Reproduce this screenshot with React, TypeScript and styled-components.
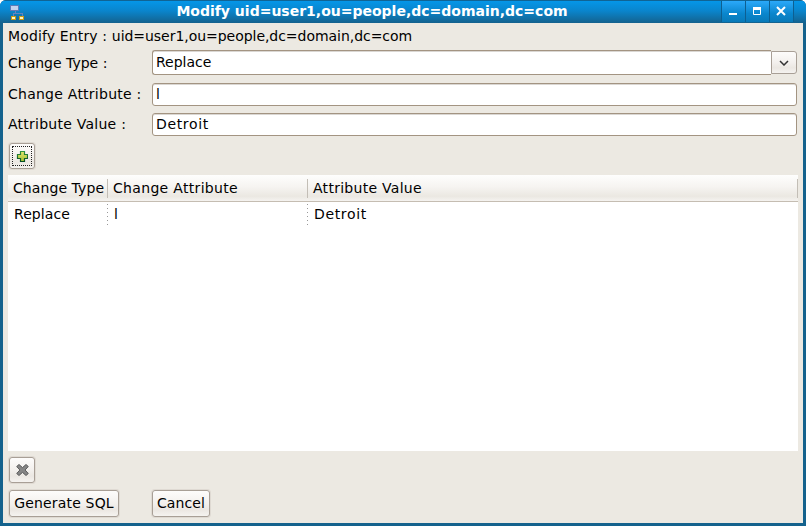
import React from "react";
import styled, { createGlobalStyle } from "styled-components";

const GlobalStyle = createGlobalStyle`
  * { box-sizing: border-box; }
  body { margin: 0; background: #fff; overflow: hidden; }
  button, input { font: inherit; color: inherit; }
`;

const Window = styled.div`
  width: 806px;
  height: 526px;
  display: flex;
  flex-direction: column;
  border-radius: 6px 6px 0 0;
  overflow: hidden;
  background: #14628d;
  font: 14px/18px "DejaVu Sans", sans-serif;
  color: #000;
`;

const TitleBar = styled.header`
  height: 23px;
  flex: none;
  display: flex;
  align-items: stretch;
  border-top: 1px solid #106494;
  background: linear-gradient(#0596e8, #0a85cc 45%, #14628e);
  padding: 0 10px;
`;

const AppIcon = styled.svg`
  width: 16px;
  height: 16px;
  margin-top: 3px;
  flex: none;
`;

const Title = styled.h1`
  flex: 1;
  margin: 0;
  padding-right: 3px;
  text-align: center;
  font-size: 14px;
  line-height: 21px;
  color: #fff;
  white-space: nowrap;
`;

const WindowControls = styled.div`
  display: flex;
  gap: 1px;
  padding: 0 1px;
  background: #0d5f91;
  margin: 0 2px 1px 0;
`;

const ControlButton = styled.button`
  width: 23px;
  height: 21px;
  padding: 0;
  border: 0;
  background: linear-gradient(#2ba9fa, #0a86cd 60%, #0879b8);
  svg { display: block; }
`;

const Content = styled.main`
  flex: 1;
  margin: 0 3px 3px;
  padding: 4px 5px 5px;
  display: flex;
  flex-direction: column;
  align-items: stretch;
  background: #ece9e2;
`;

const Tracked = styled.span<{ $by: number }>`
  letter-spacing: ${(p) => p.$by}px;
`;

const Caption = styled.div`
  height: 18px;
  width: 404px;
  white-space: nowrap;
`;

const Form = styled.div`
  display: grid;
  grid-template-columns: 144px 645px;
  grid-template-rows: 26px 23px 23px;
  row-gap: 7px;
  margin-top: 5px;
  align-items: center;
`;

const Label = styled.label`
  padding-bottom: 2px;
  white-space: nowrap;
`;

const ComboLabel = styled(Label)`
  padding-bottom: 0;
`;

const TextField = styled.input<{ $tracking?: number }>`
  width: 100%;
  height: 23px;
  padding: 0 3px 2px;
  border: 1px solid #a39482;
  border-radius: 3px;
  outline: 0;
  background: #fff;
  box-shadow: inset 0 1px 0 #dad7d3;
  letter-spacing: ${(p) => p.$tracking ?? 0}px;
`;

const Combo = styled.div`
  display: flex;
  align-items: center;
  align-self: start;
  height: 25px;
`;

const ComboField = styled(TextField)`
  flex: 1;
  height: 25px;
  border-right: 0;
  border-radius: 3px 0 0 3px;
`;

const Button = styled.button<{ $w: number; $h: number }>`
  width: ${(p) => p.$w}px;
  height: ${(p) => p.$h}px;
  flex: none;
  display: flex;
  align-items: center;
  justify-content: center;
  padding: 0;
  border: 1px solid #a89f96;
  border-radius: 3px;
  background: linear-gradient(#fdfcfb, #f3f0ed 50%, #ebe7e2 75%, #f5f3f0);
  box-shadow: 0 0 0 1px #dfdad3;
  white-space: nowrap;
`;

const TextButton = styled(Button)`
  padding-bottom: 2px;
`;

const ComboButton = styled(Button)`
  border-radius: 0 3px 3px 0;
  box-shadow: none;
`;

const FocusRing = styled.span`
  width: 20px;
  height: 20px;
  display: grid;
  place-items: center;
  padding-bottom: 1px;
  border: 1px dotted #222;
`;

const ToolRow = styled.div`
  display: flex;
  margin: 0 0 0 1px;
`;

const AddRow = styled(ToolRow)`
  margin-top: 7px;
`;

const RemoveRow = styled(ToolRow)`
  margin-top: 6px;
`;

const Table = styled.section`
  height: 276px;
  width: 790px;
  margin-top: 6px;
  background: #fff;
`;

const TableRow = styled.div`
  display: grid;
  grid-template-columns: 100px 200px 490px;
`;

const TableHead = styled(TableRow)`
  height: 27px;
  border-bottom: 1px solid #c5bdb2;
  background: linear-gradient(#fefefd, #f6f4f1 45%, #ebe8e2 82%, #f5f3f0);
`;

const HeadCell = styled.div`
  height: 19px;
  margin-top: 4px;
  padding-left: 5px;
  border-right: 1px solid #c3beb6;
  white-space: nowrap;
`;

const Cell = styled.div`
  height: 22px;
  margin-top: 2px;
  padding: 1px 0 0 6px;
  background: repeating-linear-gradient(#999 0 1px, #fff 1px 4px) right / 1px 100% no-repeat;
  &:last-child { background: none; }
`;

const Actions = styled.footer`
  display: grid;
  grid-template-columns: 143px auto;
  margin: 7px 0 0 1px;
`;

const TreeIcon = () => (
  <AppIcon viewBox="0 0 16 16" shapeRendering="crispEdges">
    <path d="M5 6v3M3 12V9h9v3" fill="none" stroke="#6484bd" />
    <rect x="0.5" y="1.5" width="8" height="5" fill="#c4d2ee" stroke="#5d7bb9" />
    <rect x="1.5" y="12.5" width="4" height="3" fill="#fff6be" stroke="#c79a17" />
    <rect x="9.5" y="12.5" width="4" height="3" fill="#fff6be" stroke="#c79a17" />
  </AppIcon>
);

const PlusIcon = () => (
  <svg width="12" height="12" viewBox="0 0 12 12">
    <defs>
      <linearGradient id="plus" x1="0" y1="0" x2="0" y2="1">
        <stop stopColor="#e4e670" /><stop offset="1" stopColor="#a0c030" />
      </linearGradient>
      <linearGradient id="plusEdge" x1="0" y1="0" x2="0" y2="1">
        <stop stopColor="#2f9440" /><stop offset="1" stopColor="#044d25" />
      </linearGradient>
    </defs>
    <path d="M4.5 1.5h4v3h3v4h-3v3h-4v-3h-3v-4h3z" fill="url(#plus)" stroke="url(#plusEdge)" strokeWidth="1.2" />
  </svg>
);

const RemoveIcon = () => (
  <svg width="13" height="12" viewBox="-0.5 0 13 12">
    <path d="M2.5.5 6 3.6 9.5.5l2.3 2L8.6 6l3.2 3.5-2.3 2L6 8.4l-3.5 3.1-2.3-2L3.4 6 .2 2.5z" fill="#858585" stroke="#5c5c5c" strokeLinejoin="round" />
  </svg>
);

const Glyph = ({ children }: { children: React.ReactNode }) => (
  <svg width="23" height="21" viewBox="0 0 23 21" fill="none" stroke="#fff">{children}</svg>
);

const changes = [{ type: "Replace", attribute: "l", value: "Detroit" }];

export default function App() {
  return (
    <>
      <GlobalStyle />
      <Window>
        <TitleBar>
          <TreeIcon />
          <Title>Modify uid=user1,ou=people,dc=domain,dc=com</Title>
          <WindowControls>
            <ControlButton aria-label="Minimize"><Glyph><path d="M7 13h8" strokeWidth="2" /></Glyph></ControlButton>
            <ControlButton aria-label="Maximize"><Glyph><path d="M7.5 6v7.5h7V6" /><path d="M7 7.5h8" strokeWidth="3" /></Glyph></ControlButton>
            <ControlButton aria-label="Close"><Glyph><path d="m7 6 8 8m0-8-8 8" strokeWidth="2" /></Glyph></ControlButton>
          </WindowControls>
        </TitleBar>
        <Content>
          <Caption>
            <Tracked $by={0.14}>Modify Entry : </Tracked>
            <Tracked $by={-0.04}>uid=user1,ou=people,dc=domain,dc=com</Tracked>
          </Caption>
          <Form>
            <ComboLabel htmlFor="type">Change Type :</ComboLabel>
            <Combo>
              <ComboField id="type" defaultValue="Replace" />
              <ComboButton $w={26} $h={23} aria-label="Open list">
                <svg width="10" height="6" viewBox="0 0 10 6"><path d="m1 1 4 4 4-4" fill="none" stroke="#333" strokeWidth="1.5" /></svg>
              </ComboButton>
            </Combo>
            <Label htmlFor="attribute"><Tracked $by={0.25}>Change Attribute :</Tracked></Label>
            <TextField id="attribute" defaultValue="l" />
            <Label htmlFor="value"><Tracked $by={0.25}>Attribute Value :</Tracked></Label>
            <TextField id="value" defaultValue="Detroit" $tracking={0.65} />
          </Form>
          <AddRow>
            <Button $w={26} $h={26} aria-label="Add change"><FocusRing><PlusIcon /></FocusRing></Button>
          </AddRow>
          <Table>
            <TableHead>
              <HeadCell><Tracked $by={0.08}>Change Type</Tracked></HeadCell>
              <HeadCell><Tracked $by={0.32}>Change Attribute</Tracked></HeadCell>
              <HeadCell><Tracked $by={0.28}>Attribute Value</Tracked></HeadCell>
            </TableHead>
            {changes.map((c) => (
              <TableRow key={c.attribute}>
                <Cell><Tracked $by={0.08}>{c.type}</Tracked></Cell>
                <Cell>{c.attribute}</Cell>
                <Cell><Tracked $by={0.65}>{c.value}</Tracked></Cell>
              </TableRow>
            ))}
          </Table>
          <RemoveRow>
            <Button $w={26} $h={26} aria-label="Remove change"><RemoveIcon /></Button>
          </RemoveRow>
          <Actions>
            <TextButton $w={110} $h={27}><Tracked $by={0.18}>Generate SQL</Tracked></TextButton>
            <TextButton $w={58} $h={27}><Tracked $by={0.12}>Cancel</Tracked></TextButton>
          </Actions>
        </Content>
      </Window>
    </>
  );
}
